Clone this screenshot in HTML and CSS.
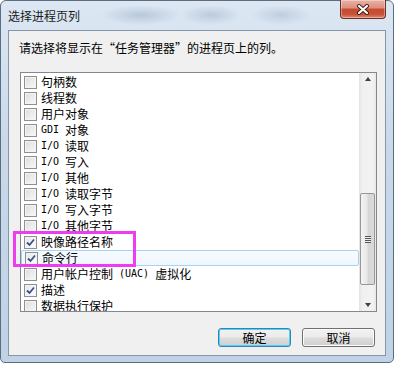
FILE: index.html
```html
<!DOCTYPE html>
<html lang="zh-CN">
<head>
  <meta charset="UTF-8"/>
  <title>选择进程页列</title>
  <link rel="stylesheet" href="styles.css">
</head>
<body>

  <div class="window">
    <div class="titlebar">
      <span class="title">选择进程页列</span>
      <button class="close" aria-label="关闭">
        <svg width="14" height="11" viewBox="0 0 14 11">
          <path d="M3 2 L11 9 M11 2 L3 9" stroke="#3a1a14" stroke-width="4" stroke-linecap="round"/>
          <path d="M3 2 L11 9 M11 2 L3 9" stroke="#fff" stroke-width="2.2" stroke-linecap="round"/>
        </svg>
      </button>
    </div>

    <div class="client">
      <p class="prompt">请选择将显示在“任务管理器”的进程页上的列。</p>

      <div class="listbox">
        <ul class="items">
          <li class="row"><span class="box"></span><span class="label">句柄数</span></li>
          <li class="row"><span class="box"></span><span class="label">线程数</span></li>
          <li class="row"><span class="box"></span><span class="label">用户对象</span></li>
          <li class="row"><span class="box"></span><span class="label"><span class="en">GDI </span>对象</span></li>
          <li class="row"><span class="box"></span><span class="label"><span class="en">I/O </span>读取</span></li>
          <li class="row"><span class="box"></span><span class="label"><span class="en">I/O </span>写入</span></li>
          <li class="row"><span class="box"></span><span class="label"><span class="en">I/O </span>其他</span></li>
          <li class="row"><span class="box"></span><span class="label"><span class="en">I/O </span>读取字节</span></li>
          <li class="row"><span class="box"></span><span class="label"><span class="en">I/O </span>写入字节</span></li>
          <li class="row"><span class="box"></span><span class="label"><span class="en">I/O </span>其他字节</span></li>
          <li class="row"><span class="box checked"><svg viewBox="0 0 9 9"><path d="M1 4.5 L3.5 7 L8 1.5" fill="none" stroke="#3b4f88" stroke-width="1.8"/></svg></span><span class="label">映像路径名称</span></li>
          <li class="row focus"><span class="box checked"><svg viewBox="0 0 9 9"><path d="M1 4.5 L3.5 7 L8 1.5" fill="none" stroke="#3b4f88" stroke-width="1.8"/></svg></span><span class="label">命令行</span></li>
          <li class="row"><span class="box"></span><span class="label">用户帐户控制<span class="en"> (UAC) </span>虚拟化</span></li>
          <li class="row"><span class="box checked"><svg viewBox="0 0 9 9"><path d="M1 4.5 L3.5 7 L8 1.5" fill="none" stroke="#3b4f88" stroke-width="1.8"/></svg></span><span class="label">描述</span></li>
          <li class="row"><span class="box"></span><span class="label">数据执行保护</span></li>
        </ul>

        <div class="scrollbar">
          <div class="arrow up"></div>
          <div class="track">
            <div class="thumb"><span class="grip"></span></div>
          </div>
          <div class="arrow down"></div>
        </div>

        <!-- annotation drawn over the list -->
        <div class="mark"></div>
      </div>

      <div class="buttons">
        <button class="btn default">确定</button>
        <button class="btn">取消</button>
      </div>
    </div>
  </div>

</body>
</html>
```

FILE: styles.css
```css
* {
  box-sizing: border-box;
}

body {
  margin: 0;
  background: #fff;
  font-family: "Noto Sans CJK SC", sans-serif;
  font-size: 12px;
  color: #000;
}

.window {
  width: 394px;
  height: 363px;
  display: flex;
  flex-direction: column;
  padding: 0 7px 6px 7px;
  border: 1px solid #5d6d80;
  border-radius: 6px 6px 5px 5px;
  background:
    radial-gradient(ellipse 40px 10px at 140px 14px, rgba(150,170,195,0.5), transparent),
    radial-gradient(ellipse 30px 10px at 210px 14px, rgba(150,170,195,0.45), transparent),
    radial-gradient(ellipse 30px 10px at 280px 14px, rgba(150,170,195,0.4), transparent),
    linear-gradient(to bottom, #dce7f3, #c9d9ea 40%, #bfd2e6);
}

.titlebar {
  height: 29px;
  display: flex;
  justify-content: space-between;
  align-items: flex-start;
}

.title {
  padding-top: 8px;
  line-height: 14px;
  color: #1a1a1a;
}

.close {
  width: 46px;
  height: 19px;
  margin-top: -1px;
  padding: 0;
  display: flex;
  justify-content: center;
  align-items: center;
  border: 1px solid #6a2f27;
  border-top: none;
  border-radius: 0 0 4px 4px;
  background: linear-gradient(to bottom, #e9b2a4, #dc8f7e 45%, #c54a30 50%, #c9523a 80%, #e08a70);
  box-shadow: inset 0 0 0 1px rgba(255,255,255,0.35);
}

.client {
  flex: 1;
  display: flex;
  flex-direction: column;
  background: #f0f0f0;
  border: 1px solid #8796a6;
  padding: 9px 10px 0 11px;
}

.prompt {
  margin: 0 0 16px -1px;
  line-height: 16px;
}

.listbox {
  position: relative;
  width: 357px;
  height: 240px;
  border: 1px solid #828790;
  background: #fff;
  display: flex;
}

.items {
  flex: 1;
  list-style: none;
  margin: 0;
  padding: 1px 0 0 0;
  overflow: hidden;
}

.row {
  height: 16px;
  display: flex;
  align-items: center;
  gap: 4px;
  padding-left: 3px;
  line-height: 16px;
  white-space: nowrap;
  border: 1px solid transparent;
  border-left: none;
}

.row.focus {
  border: 1px solid #a5d3f7;
  border-radius: 2px;
  background: linear-gradient(to bottom, #f8fbfe, #eef6fd);
}

.label {
  line-height: 14px;
}

.en {
  display: inline-block;
  font-family: "DejaVu Sans Mono", monospace;
  font-size: 10px;
  line-height: 14px;
  white-space: pre;
  vertical-align: top;
}

.box {
  width: 13px;
  height: 13px;
  flex: none;
  border: 1px solid #8e8f8f;
  background: linear-gradient(135deg, #dcdcdc, #f4f4f4 80%);
  box-shadow: inset 0 0 0 1px #f4f4f4;
  display: flex;
  align-items: center;
  justify-content: center;
}

.box.checked {
  background: linear-gradient(135deg, #e6e6e6, #fbfbfb 80%);
}

.box svg {
  width: 9px;
  height: 9px;
}

.scrollbar {
  width: 17px;
  flex: none;
  display: flex;
  flex-direction: column;
  background: linear-gradient(to right, #e3e3e3, #f0f0f0 20%, #f2f2f2 80%, #e8e8e8);
}

.arrow {
  height: 17px;
  display: flex;
  justify-content: center;
  align-items: center;
}

.arrow::after {
  content: "";
  width: 0;
  height: 0;
  border-left: 3.5px solid transparent;
  border-right: 3.5px solid transparent;
}

.arrow.up::after {
  border-bottom: 4px solid #404040;
  margin-top: -6px;
}

.arrow.down::after {
  border-top: 4px solid #404040;
  margin-top: 4px;
}

.track {
  flex: 1;
}

.thumb {
  margin: 103px 1px 0 1px;
  height: 92px;
  border: 1px solid #979797;
  border-radius: 2px;
  background: linear-gradient(to right, #f3f3f3, #e8e8e8 45%, #d6d6d6 55%, #dadada);
  display: flex;
  justify-content: center;
  align-items: center;
}

.grip {
  width: 6px;
  height: 7px;
  background: repeating-linear-gradient(to bottom, #555 0 1px, #eee 1px 2px);
}

.mark {
  position: absolute;
  left: -8px;
  top: 158px;
  width: 123px;
  height: 36px;
  border: 3px solid #ee3cee;
}

.buttons {
  display: flex;
  justify-content: flex-end;
  gap: 11px;
  margin-top: 16px;
}

.btn {
  width: 73px;
  height: 19px;
  padding: 0;
  font-family: "Noto Sans CJK SC", sans-serif;
  font-size: 12px;
  line-height: 17px;
  color: #000;
  border: 1px solid #707070;
  border-radius: 3px;
  background: linear-gradient(to bottom, #f2f2f2, #ebebeb 48%, #dddddd 52%, #cfcfcf);
  box-shadow: inset 0 0 0 1px #fbfbfb;
}

.btn.default {
  border-color: #3c7fb1;
  box-shadow: inset 0 0 0 1px #48d4fc;
}
```
